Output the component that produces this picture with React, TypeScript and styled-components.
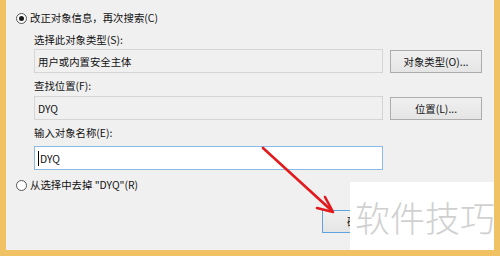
import styled, { createGlobalStyle } from "styled-components";

const GlobalStyle = createGlobalStyle`
  html, body {
    margin: 0;
    padding: 0;
    background: #f0f0f0;
  }
  body {
    font-family: "Noto Sans CJK SC", "Noto Sans", sans-serif;
    font-size: 10.4px;
    color: #111;
  }
`;

const ORANGE = "#f0c264";

const Frame = styled.div`
  position: relative;
  width: 500px;
  height: 256px;
  box-sizing: border-box;
  background: #f0f0f0;
  border-left: 6px solid ${ORANGE};
  border-right: 6px solid ${ORANGE};
  border-bottom: 6px solid ${ORANGE};
  overflow: hidden;
`;

const Content = styled.div`
  display: flex;
  flex-direction: column;
  align-items: flex-start;
  padding: 11px 0 0 10px;
`;

const RadioRow = styled.label<{ $top: number }>`
  display: flex;
  align-items: center;
  gap: 3px;
  height: 14px;
  margin-top: ${(p) => p.$top}px;
  line-height: 14px;
  white-space: nowrap;
`;

const RadioCircle = styled.span<{ $checked?: boolean }>`
  position: relative;
  width: 11px;
  height: 11px;
  box-sizing: border-box;
  border: 1px solid #555;
  border-radius: 50%;
  background: #fff;
  &::after {
    content: "";
    display: ${(p) => (p.$checked ? "block" : "none")};
    position: absolute;
    left: 2px;
    top: 2px;
    width: 5px;
    height: 5px;
    border-radius: 50%;
    background: #1a1a1a;
  }
`;

const FieldLabel = styled.div<{ $top: number }>`
  margin: ${(p) => p.$top}px 0 0 18px;
  height: 14px;
  line-height: 14px;
  white-space: nowrap;
`;

const FieldRow = styled.div<{ $top: number }>`
  display: flex;
  gap: 7px;
  margin: ${(p) => p.$top}px 0 0 18px;
`;

const TextBox = styled.div<{ $active?: boolean }>`
  display: flex;
  align-items: center;
  width: 349px;
  height: 24px;
  box-sizing: border-box;
  padding-left: 3px;
  border: 1px solid ${(p) => (p.$active ? "#8cb9e6" : "#d5d5d5")};
  background: ${(p) => (p.$active ? "#fff" : "#f0f0f0")};
  white-space: nowrap;
`;

const Caret = styled.span`
  width: 1px;
  height: 15px;
  background: #000;
  margin-right: 1px;
`;

const Button = styled.button<{ $default?: boolean }>`
  width: ${(p) => (p.$default ? 75 : 92)}px;
  height: 23px;
  margin-top: 1px;
  padding: 0;
  box-sizing: border-box;
  border: 1px solid ${(p) => (p.$default ? "#5fa2e0" : "#acacac")};
  background: linear-gradient(#f0f0f0, #e5e5e5);
  font: inherit;
  color: #111;
`;

const BottomButton = styled(Button)`
  margin: 18px 0 0 306px;
  padding-left: 4px;
  text-align: left;
  padding-left: 24px;
`;

const Watermark = styled.div`
  position: absolute;
  left: 344px;
  top: 182px;
  width: 156px;
  height: 80px;
  background: #fff;
  box-sizing: border-box;
  padding: 10px 0 0 5px;
  font-size: 35px;
  font-weight: 300;
  line-height: 50px;
  color: #d0d0d0;
  white-space: nowrap;
`;

const Arrow = styled.svg`
  position: absolute;
  left: -6px;
  top: 0;
  pointer-events: none;
`;

export default function App() {
  return (
    <>
      <GlobalStyle />
      <Frame>
        <Content>
          <RadioRow $top={0}>
            <RadioCircle $checked />
            改正对象信息，再次搜索(C)
          </RadioRow>
          <FieldLabel $top={8}>选择此对象类型(S):</FieldLabel>
          <FieldRow $top={2}>
            <TextBox>用户或内置安全主体</TextBox>
            <Button>对象类型(O)...</Button>
          </FieldRow>
          <FieldLabel $top={6}>查找位置(F):</FieldLabel>
          <FieldRow $top={3}>
            <TextBox>DYQ</TextBox>
            <Button>位置(L)...</Button>
          </FieldRow>
          <FieldLabel $top={6}>输入对象名称(E):</FieldLabel>
          <FieldRow $top={6}>
            <TextBox $active>
              <Caret />
              DYQ
            </TextBox>
          </FieldRow>
          <RadioRow $top={8}>
            <RadioCircle />
            从选择中去掉 "DYQ"(R)
          </RadioRow>
          <BottomButton $default>确定</BottomButton>
        </Content>
        <Arrow width="500" height="256" viewBox="0 0 500 256">
          <line
            x1="263"
            y1="148"
            x2="331"
            y2="210"
            stroke="#e3191c"
            strokeWidth="2.6"
            strokeLinecap="round"
          />
          <polyline
            points="325,197 333,212 317,208"
            fill="none"
            stroke="#e3191c"
            strokeWidth="2.6"
            strokeLinecap="round"
            strokeLinejoin="round"
          />
        </Arrow>
        <Watermark>软件技巧</Watermark>
      </Frame>
    </>
  );
}
